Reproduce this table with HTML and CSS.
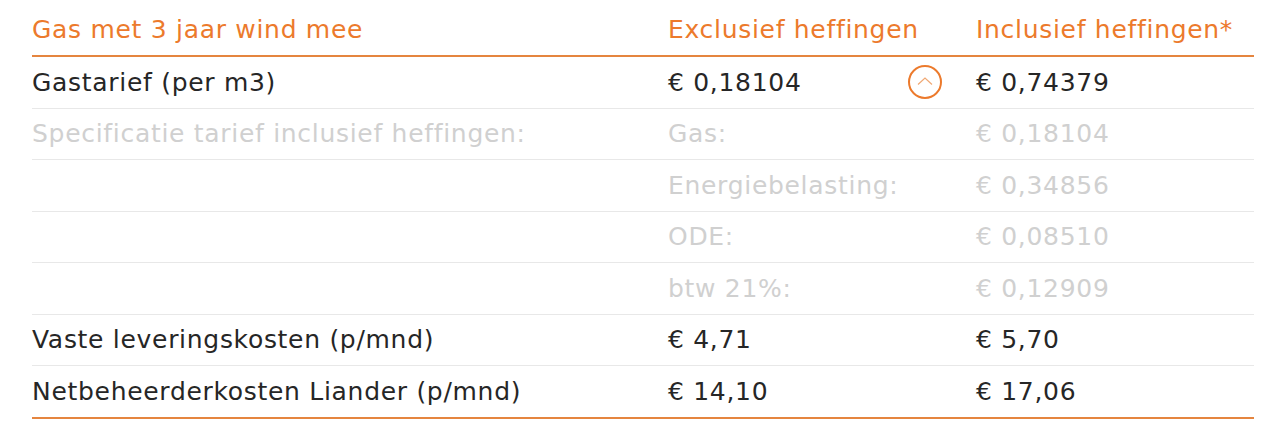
FILE: index.html
```html
<!DOCTYPE html>
<html lang="nl">
<head>
<meta charset="utf-8">
<title>Gas met 3 jaar wind mee</title>
<link rel="stylesheet" href="styles.css">
</head>
<body>
<div class="tariffs">
  <div class="row head">
    <div class="cell">Gas met 3 jaar wind mee</div>
    <div class="cell">Exclusief heffingen</div>
    <div class="cell">Inclusief heffingen*</div>
  </div>
  <div class="row">
    <div class="cell">Gastarief (per m3)</div>
    <div class="cell with-toggle">
      <span>€ 0,18104</span>
      <span class="toggle">
        <svg width="16" height="8" viewBox="0 0 16 8"><path d="M1 7.5 L8 1 L15 7.5" fill="none" stroke="#f0a874" stroke-width="1.2"/></svg>
      </span>
    </div>
    <div class="cell">€ 0,74379</div>
  </div>
  <div class="row spec">
    <div class="cell">Specificatie tarief inclusief heffingen:</div>
    <div class="cell">Gas:</div>
    <div class="cell">€ 0,18104</div>
  </div>
  <div class="row spec">
    <div class="cell"></div>
    <div class="cell">Energiebelasting:</div>
    <div class="cell">€ 0,34856</div>
  </div>
  <div class="row spec">
    <div class="cell"></div>
    <div class="cell">ODE:</div>
    <div class="cell">€ 0,08510</div>
  </div>
  <div class="row spec">
    <div class="cell"></div>
    <div class="cell">btw 21%:</div>
    <div class="cell">€ 0,12909</div>
  </div>
  <div class="row">
    <div class="cell">Vaste leveringskosten (p/mnd)</div>
    <div class="cell">€ 4,71</div>
    <div class="cell">€ 5,70</div>
  </div>
  <div class="row last">
    <div class="cell">Netbeheerderkosten Liander (p/mnd)</div>
    <div class="cell">€ 14,10</div>
    <div class="cell">€ 17,06</div>
  </div>
</div>
</body>
</html>
```

FILE: styles.css
```css
html, body {
  margin: 0;
  padding: 0;
  background: #ffffff;
}

body {
  font-family: "DejaVu Sans", "Open Sans", sans-serif;
  font-size: 25px;
  letter-spacing: 0.7px;
  color: #262626;
}

.tariffs {
  margin: 0 26px 0 32px;
}

.row {
  display: grid;
  grid-template-columns: 636px 308px 1fr;
  align-items: center;
  height: 51.5px;
  box-sizing: border-box;
  border-bottom: 1px solid #e8e8e8;
}

.row.head {
  height: 57px;
  align-items: end;
  padding-bottom: 11px;
  border-bottom: 2px solid #e5853f;
  color: #ec7a2c;
}

.row.last {
  border-bottom: 2px solid #e5853f;
  height: 52.5px;
}

.row.spec {
  color: #d0d0d0;
}

.cell {
  white-space: nowrap;
}

.with-toggle {
  display: flex;
  align-items: center;
  justify-content: space-between;
  padding-right: 34px;
}

.toggle {
  width: 34px;
  height: 34px;
  box-sizing: border-box;
  border: 2px solid #ec7a2c;
  border-radius: 50%;
  display: flex;
  align-items: center;
  justify-content: center;
  padding-bottom: 3px;
}
```
